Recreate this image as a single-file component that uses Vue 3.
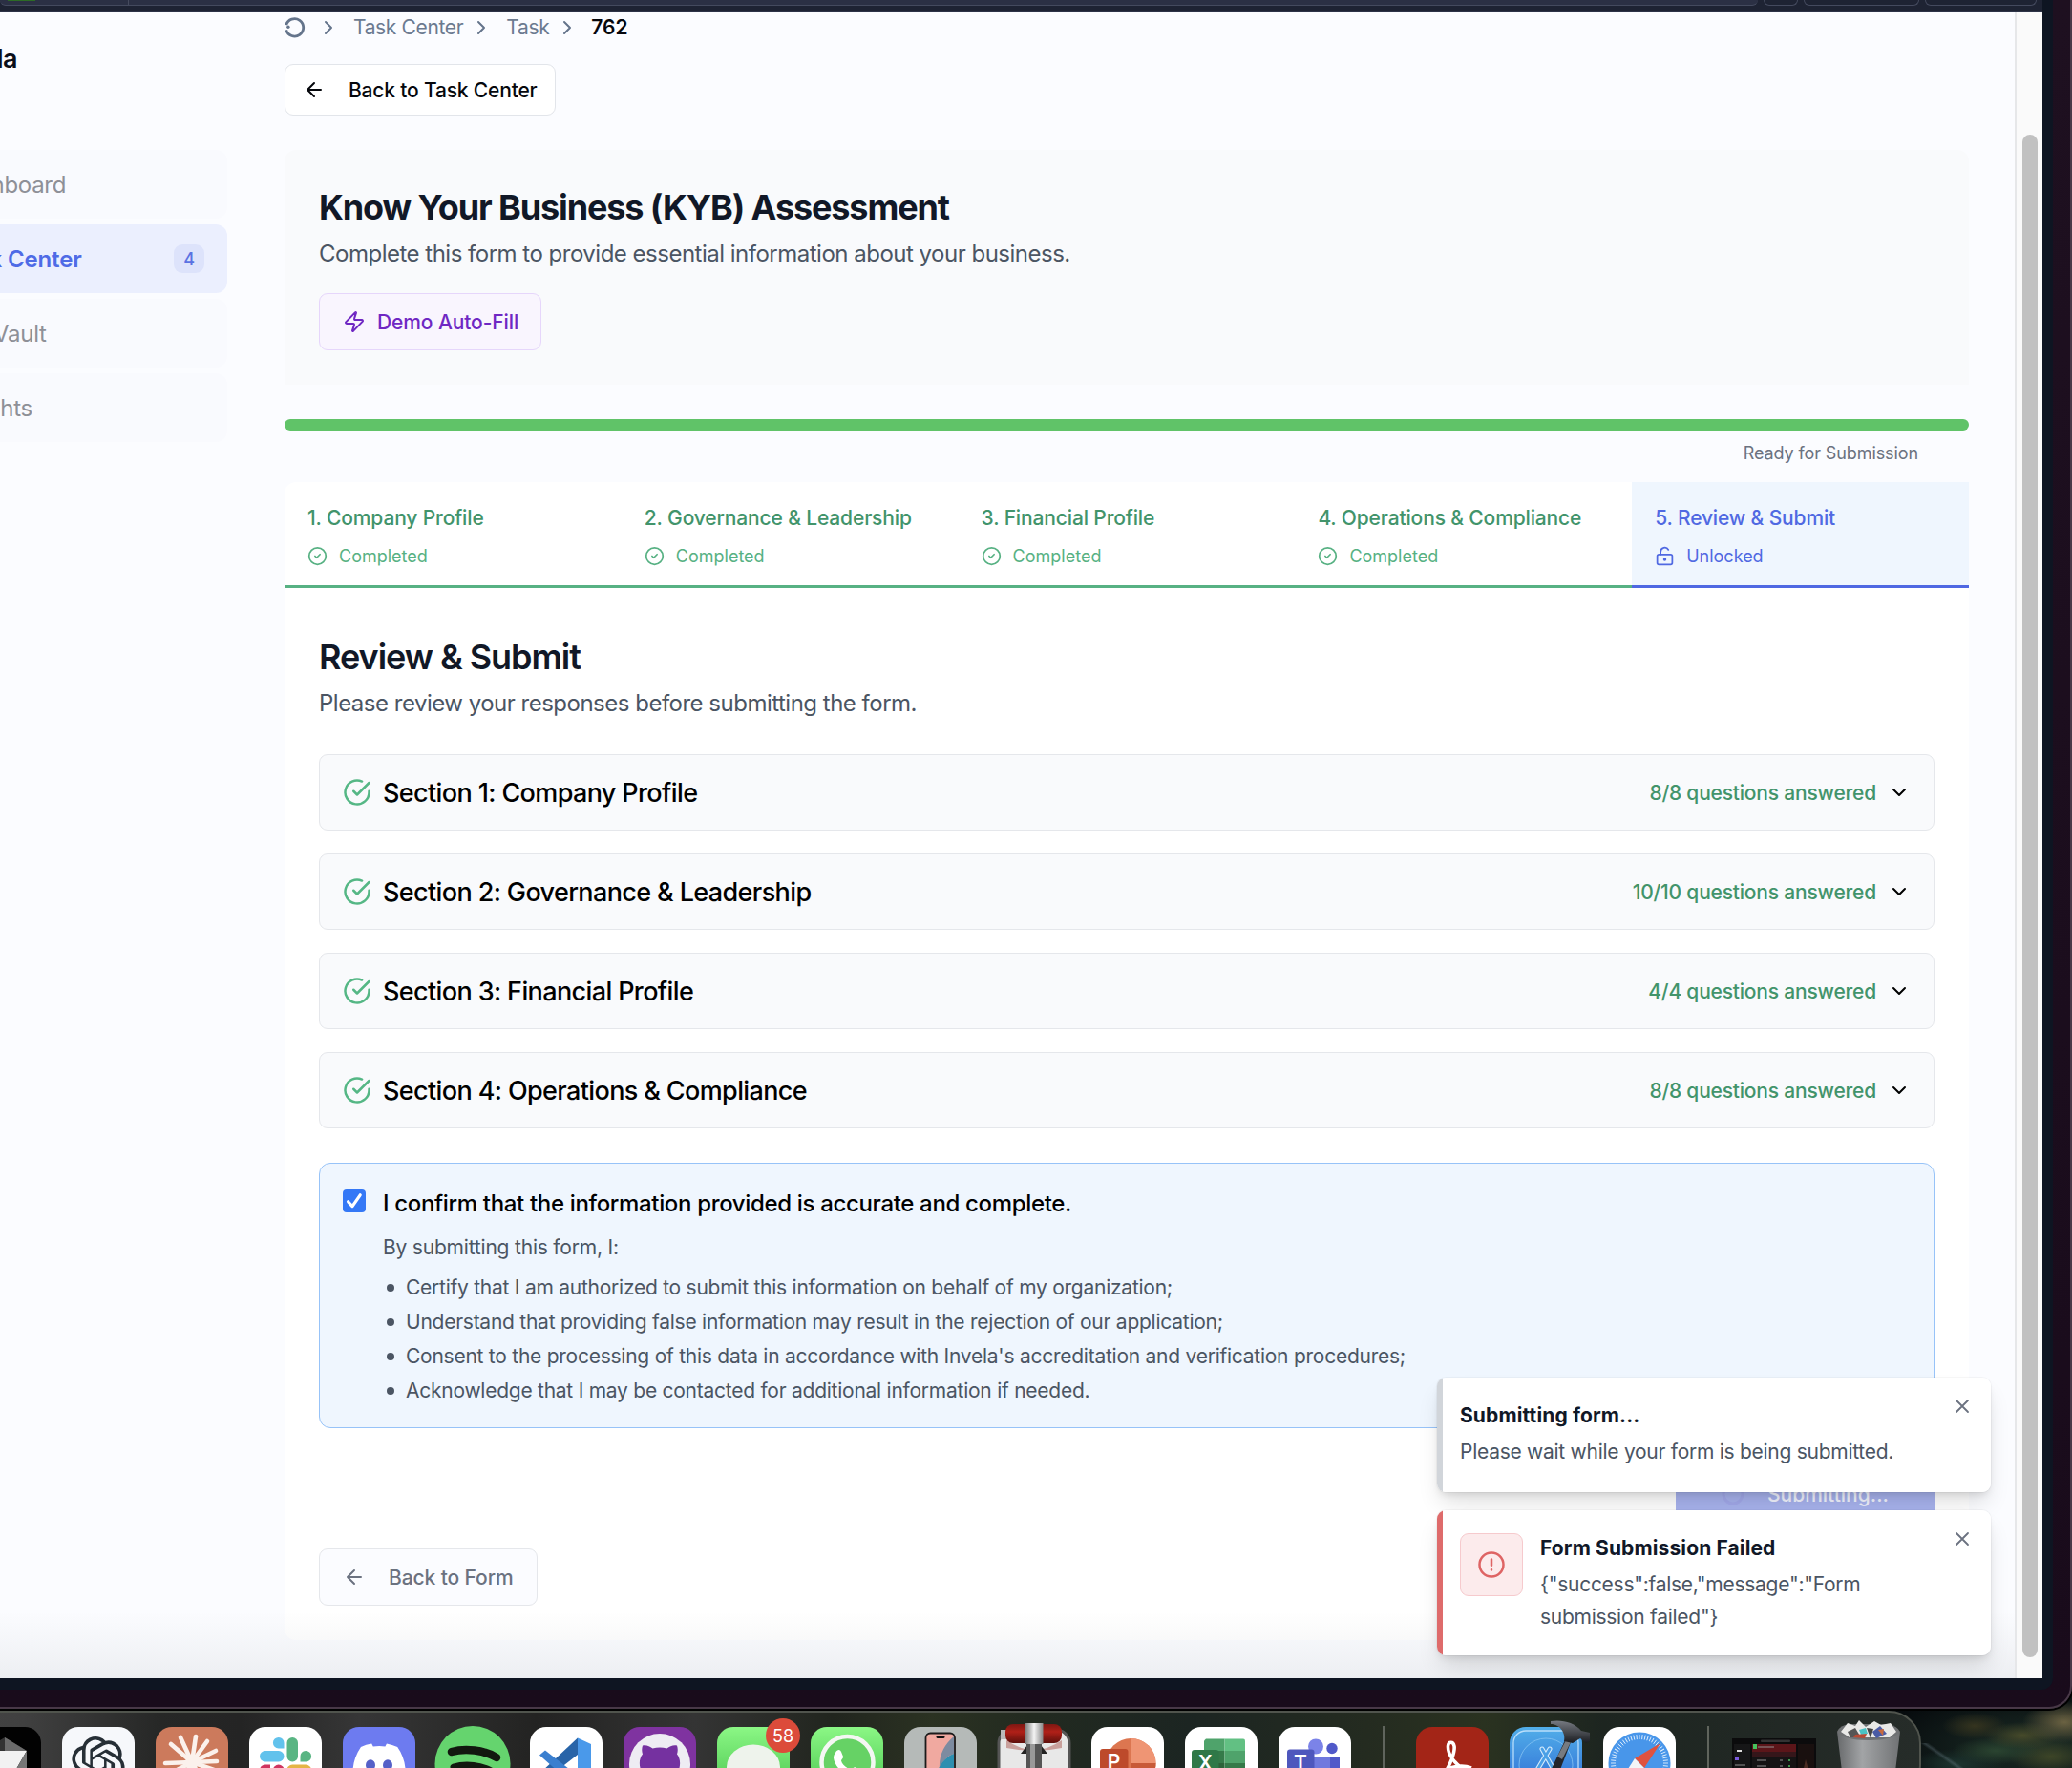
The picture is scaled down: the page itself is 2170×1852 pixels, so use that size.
<script setup>
const nav = [
  { label: 'Dashboard' },
  { label: 'Task Center', active: true, count: 4 },
  { label: 'File Vault' },
  { label: 'Insights' },
]
const tabs = [
  '1. Company Profile',
  '2. Governance & Leadership',
  '3. Financial Profile',
  '4. Operations & Compliance',
]
const sections = [
  { title: 'Section 1: Company Profile', answered: '8/8' },
  { title: 'Section 2: Governance & Leadership', answered: '10/10' },
  { title: 'Section 3: Financial Profile', answered: '4/4' },
  { title: 'Section 4: Operations & Compliance', answered: '8/8' },
]
const terms = [
  'Certify that I am authorized to submit this information on behalf of my organization;',
  'Understand that providing false information may result in the rejection of our application;',
  "Consent to the processing of this data in accordance with Invela's accreditation and verification procedures;",
  'Acknowledge that I may be contacted for additional information if needed.',
]
const rays = [
  [38, 37, 26, 11], [38, 37, 42, 10], [38, 37, 54, 15], [38, 37, 63, 25], [38, 37, 64, 36],
  [38, 37, 16, 18], [38, 37, 10, 38], [38, 37, 13, 50], [38, 37, 64, 46], [38, 37, 24, 62], [38, 37, 52, 62],
]
const ticks = Array.from({ length: 60 }, (_, i) => i * 6)
</script>

<template>
  <div class="desktop">
    <div class="window">
      <div class="frame">
        <div class="toolbar">
          <div class="url"><i class="lock"></i><i class="rule"></i></div>
          <div class="tool t1"></div>
          <div class="tool t2"></div>
          <div class="tool t3"></div>
        </div>
        <div class="page">
          <aside class="sidebar">
            <div class="brand">Invela</div>
            <nav>
              <div v-for="n in nav" :key="n.label" class="nav-item" :class="{ active: n.active }">
                <span>{{ n.label }}</span>
                <b v-if="n.count" class="count">{{ n.count }}</b>
              </div>
            </nav>
          </aside>

          <main class="main">
            <div class="crumbs">
              <svg class="home" width="22" height="22" viewBox="0 0 22 22" fill="none">
                <path d="M1.700 8.200A9.200 9.200 0 1 1 1.700 13.400" stroke="#64748b" stroke-width="2.800" />
                <circle cx="3.900" cy="10.200" r="1.700" fill="#64748b" />
              </svg>
              <svg class="chev" viewBox="0 0 24 24"><path d="m9 18 6-6-6-6" /></svg>
              <span class="c1">Task Center</span>
              <svg class="chev" viewBox="0 0 24 24"><path d="m9 18 6-6-6-6" /></svg>
              <span class="c2">Task</span>
              <svg class="chev" viewBox="0 0 24 24"><path d="m9 18 6-6-6-6" /></svg>
              <strong>762</strong>
            </div>

            <button class="btn back">
              <svg viewBox="0 0 24 24"><path d="m12 19-7-7 7-7M19 12H5" /></svg>
              <span>Back to Task Center</span>
            </button>

            <section class="intro">
              <h1>Know Your Business (KYB) Assessment</h1>
              <p>Complete this form to provide essential information about your business.</p>
              <button class="btn demo">
                <svg viewBox="0 0 24 24"><path d="M4 14a1 1 0 0 1-.78-1.63l9.9-10.2a.5.5 0 0 1 .86.46l-1.92 6.02A1 1 0 0 0 13 10h7a1 1 0 0 1 .78 1.63l-9.9 10.2a.5.5 0 0 1-.86-.46l1.92-6.02A1 1 0 0 0 11 14z" /></svg>
                <span>Demo Auto-Fill</span>
              </button>
            </section>

            <div class="progress"></div>
            <div class="ready">Ready for Submission</div>

            <div class="tabs">
              <div v-for="t in tabs" :key="t" class="tab">
                <div class="tab-title">{{ t }}</div>
                <div class="tab-state">
                  <svg viewBox="0 0 24 24"><circle cx="12" cy="12" r="10" /><path d="m9 12 2 2 4-4" /></svg>
                  <span>Completed</span>
                </div>
              </div>
              <div class="tab current">
                <div class="tab-title">5. Review &amp; Submit</div>
                <div class="tab-state">
                  <svg viewBox="0 0 24 24"><circle cx="12" cy="16" r="1" /><rect x="3" y="10" width="18" height="12" rx="2" /><path d="M7 10V7a5 5 0 0 1 9.33-2.5" /></svg>
                  <span>Unlocked</span>
                </div>
              </div>
            </div>

            <section class="review">
              <h2>Review &amp; Submit</h2>
              <p class="lead">Please review your responses before submitting the form.</p>

              <div class="sections">
                <div v-for="s in sections" :key="s.title" class="row">
                  <svg class="ok" viewBox="0 0 24 24"><path d="M22 11.08V12a10 10 0 1 1-5.93-9.14" /><path d="m9 11 3 3L22 4" /></svg>
                  <span class="row-title">{{ s.title }}</span>
                  <span class="answered">{{ s.answered }} questions answered</span>
                  <svg class="down" viewBox="0 0 24 24"><path d="m6 9 6 6 6-6" /></svg>
                </div>
              </div>

              <div class="consent">
                <span class="check">
                  <svg viewBox="0 0 24 24"><path d="M5.6 12.8 10 17.6 18.2 5.8" /></svg>
                </span>
                <div>
                  <div class="confirm">I confirm that the information provided is accurate and complete.</div>
                  <div class="by">By submitting this form, I:</div>
                  <ul>
                    <li v-for="t in terms" :key="t">{{ t }}</li>
                  </ul>
                </div>
              </div>

              <div class="submit-row">
                <button class="submit">
                  <svg class="spinner" viewBox="0 0 24 24"><circle cx="12" cy="12" r="10" /></svg>
                  <span>Submitting...</span>
                </button>
              </div>
              <button class="btn form-back">
                <svg viewBox="0 0 24 24"><path d="m12 19-7-7 7-7M19 12H5" /></svg>
                <span>Back to Form</span>
              </button>
            </section>
          </main>

          <div class="scroll"><div class="thumb"></div></div>
          <div class="shade"></div>

          <div class="toasts">
            <div class="toast">
              <div class="toast-body">
                <div class="toast-title">Submitting form...</div>
                <div class="toast-text">Please wait while your form is being submitted.</div>
              </div>
              <svg class="close" viewBox="0 0 24 24"><path d="M18 6 6 18M6 6l12 12" /></svg>
            </div>
            <div class="toast failed">
              <div class="alert">
                <svg viewBox="0 0 24 24"><circle cx="12" cy="12" r="10" /><path d="M12 7.5v5M12 16.2v.1" /></svg>
              </div>
              <div class="toast-body">
                <div class="toast-title">Form Submission Failed</div>
                <div class="toast-text">{"success":false,"message":"Form<br />submission failed"}</div>
              </div>
              <svg class="close" viewBox="0 0 24 24"><path d="M18 6 6 18M6 6l12 12" /></svg>
            </div>
          </div>
        </div>
      </div>
    </div>

    <div class="dock">
      <!-- Cursor -->
      <svg class="app" viewBox="0 0 76 76">
        <rect width="76" height="76" rx="17" fill="#020202" />
        <path d="M38 11 61 25H15Z" fill="#333" /><path d="M38 11 61 25 38 25Z" fill="#6b6b6b" />
        <path d="M15 25H61L38 65Z" fill="#f2f2f2" /><path d="M61 25V52L38 65Z" fill="#777" />
      </svg>
      <!-- ChatGPT -->
      <svg class="app" viewBox="0 0 76 76">
        <rect width="76" height="76" rx="17" fill="#f6f8fb" />
        <path transform="translate(10 10) scale(2.33)" fill="#262f36" d="M22.2819 9.8211a5.9847 5.9847 0 0 0-.5157-4.9108 6.0462 6.0462 0 0 0-6.5098-2.9A6.0651 6.0651 0 0 0 4.9807 4.1818a5.9847 5.9847 0 0 0-3.9977 2.9 6.0462 6.0462 0 0 0 .7427 7.0966 5.98 5.98 0 0 0 .511 4.9107 6.051 6.051 0 0 0 6.5146 2.9001A5.9847 5.9847 0 0 0 13.2599 24a6.0557 6.0557 0 0 0 5.7718-4.2058 5.9894 5.9894 0 0 0 3.9977-2.9001 6.0557 6.0557 0 0 0-.7475-7.0729zm-9.022 12.6081a4.4755 4.4755 0 0 1-2.8764-1.0408l.1419-.0804 4.7783-2.7582a.7948.7948 0 0 0 .3927-.6813v-6.7369l2.02 1.1686a.071.071 0 0 1 .038.052v5.5826a4.504 4.504 0 0 1-4.4945 4.4944zm-9.6607-4.1254a4.4708 4.4708 0 0 1-.5346-3.0137l.142.0852 4.783 2.7582a.7712.7712 0 0 0 .7806 0l5.8428-3.3685v2.3324a.0804.0804 0 0 1-.0332.0615L9.74 19.9502a4.4992 4.4992 0 0 1-6.1408-1.6464zM2.3408 7.8956a4.485 4.485 0 0 1 2.3655-1.9728V11.6a.7664.7664 0 0 0 .3879.6765l5.8144 3.3543-2.0201 1.1685a.0757.0757 0 0 1-.071 0l-4.8303-2.7865A4.504 4.504 0 0 1 2.3408 7.872zm16.5963 3.8558L13.1038 8.364 15.1192 7.2a.0757.0757 0 0 1 .071 0l4.8303 2.7913a4.4944 4.4944 0 0 1-.6765 8.1042v-5.6772a.79.79 0 0 0-.407-.667zm2.0107-3.0231l-.142-.0852-4.7735-2.7818a.7759.7759 0 0 0-.7854 0L9.409 9.2297V6.8974a.0662.0662 0 0 1 .0284-.0615l4.8303-2.7866a4.4992 4.4992 0 0 1 6.6802 4.66zM8.3065 12.863l-2.02-1.1638a.0804.0804 0 0 1-.038-.0567V6.0742a4.4992 4.4992 0 0 1 7.3757-3.4537l-.142.0805L8.704 5.459a.7948.7948 0 0 0-.3927.6813zm1.0976-2.3654l2.602-1.4998 2.6069 1.4998v2.9994l-2.5974 1.4997-2.6067-1.4997Z" />
      </svg>
      <!-- Claude -->
      <svg class="app" viewBox="0 0 76 76">
        <rect width="76" height="76" rx="17" fill="#cc7a5c" />
        <path v-for="(r, i) in rays" :key="i" :d="`M${r[0]} ${r[1]}L${r[2]} ${r[3]}`" stroke="#fbf1ec" stroke-width="4.6" stroke-linecap="round" />
        <circle cx="38" cy="37" r="7" fill="#fbf1ec" />
      </svg>
      <!-- Slack -->
      <svg class="app" viewBox="0 0 76 76">
        <rect width="76" height="76" rx="17" fill="#fff" />
        <path d="M36.500 22.500V17A5.800 5.800 0 1 0 30.700 22.500Z" fill="#62c2ec" /><rect x="11" y="25" width="25.500" height="11.500" rx="5.700" fill="#62c2ec" />
        <rect x="39.500" y="11" width="11.500" height="25.500" rx="5.700" fill="#59b583" /><path d="M53.500 36.500V31A5.800 5.800 0 1 1 59.500 36.500Z" fill="#59b583" />
        <rect x="39.500" y="39.500" width="25.500" height="11.500" rx="5.700" fill="#e5b445" /><path d="M11 45a5.800 5.800 0 0 1 5.800-5.500H22V45Z" fill="#cf3560" /><rect x="25" y="39.500" width="11.500" height="25" rx="5.700" fill="#cf3560" />
      </svg>
      <!-- Discord -->
      <svg class="app" viewBox="0 0 76 76">
        <rect width="76" height="76" rx="17" fill="#6d7bf0" />
        <path transform="translate(10.500 11) scale(2.300)" fill="#fff" d="M20.317 4.370a19.800 19.800 0 0 0-4.885-1.515l-.08.037c-.21.375-.444.865-.608 1.250a18.300 18.300 0 0 0-5.487 0c-.163-.394-.405-.875-.617-1.250l-.08-.037A19.700 19.700 0 0 0 3.677 4.370C.533 9.046-.319 13.580.1 18.058L6 21h12l5.900-2.940c.5-5.177-.838-9.674-3.583-13.690z" />
        <ellipse cx="29" cy="40" rx="5" ry="5.800" fill="#5560c8" /><ellipse cx="47" cy="40" rx="5" ry="5.800" fill="#5560c8" />
      </svg>
      <!-- Spotify -->
      <svg class="app" viewBox="0 0 76 76">
        <circle cx="38" cy="38.500" r="39.500" fill="#65d46e" />
        <g fill="none" stroke="#12180f" stroke-linecap="round"><path d="M16 26C30 22 50 24 63 32" stroke-width="8.500" /><path d="M18 42C31 38 47 40 59 47" stroke-width="7" /></g>
      </svg>
      <!-- VS Code -->
      <svg class="app" viewBox="0 0 76 76">
        <rect width="76" height="76" rx="17" fill="#fff" />
        <path d="M50 11.500V29L18 54 11 48Z" fill="#2864a8" /><path d="M10 29.500 16 24.500 64 62V68L50 65Z" fill="#3a7fcf" /><path d="M50 11.500 64 18V60L50 65Z" fill="#4a99ea" />
      </svg>
      <!-- GitHub -->
      <svg class="app" viewBox="0 0 76 76">
        <rect width="76" height="76" rx="17" fill="#7f33a0" />
        <circle cx="38" cy="39" r="32" fill="#eeecf3" />
        <path d="M20 19.500c4-1 7.500 1 10.500 3 5-1.200 10-1.200 15 0 3-2 6.500-4 10.500-3 1 3 1 6 0 9 4 5 4 12 1 19H19c-3-7-3-14 1-19-1-3-1-6 0-9Z" fill="#7531a0" />
      </svg>
      <!-- Messages -->
      <div class="app badge-host">
        <svg class="app" viewBox="0 0 76 76">
          <defs><linearGradient id="gm" x2="0" y2="1"><stop stop-color="#8bf785" /><stop offset="1" stop-color="#44c04a" /></linearGradient></defs>
          <rect width="76" height="76" rx="17" fill="url(#gm)" />
          <ellipse cx="38" cy="42" rx="28" ry="23.500" fill="#eef3ec" />
        </svg>
        <span class="badge">58</span>
      </div>
      <!-- WhatsApp -->
      <svg class="app" viewBox="0 0 76 76">
        <rect width="76" height="76" rx="17" fill="url(#gm)" />
        <circle cx="38.500" cy="37" r="27" fill="#66d265" stroke="#f4f7f3" stroke-width="4.500" />
        <path d="M26 27c2-4 5-3.500 6-1l2 5c.6 2-2 3-2 4.500 1 4 6 8 10 9 2 0 3-3 5-2l6 3c-1 6-6 8-10 7-10-3-18-12-19-20 0-2 .7-4 2-5.500Z" fill="#fff" />
      </svg>
      <!-- iPhone Mirroring -->
      <svg class="app" viewBox="0 0 76 76">
        <rect width="76" height="76" rx="17" fill="#b5bab8" />
        <rect x="22.500" y="6.500" width="30.500" height="66" rx="5" fill="#f0a9a0" stroke="#1b1b1b" stroke-width="1.800" />
        <path d="M52 10V28C45 30 40 36 37 44 36 30 42 18 52 10Z" fill="#7d8ba0" /><path d="M52 28C43 31 37 40 33 50H52Z" fill="#2d8fb0" />
        <rect x="33.500" y="9" width="9" height="3" rx="1.500" fill="#111" />
      </svg>
      <!-- Archive utility -->
      <svg class="app" viewBox="0 0 76 76">
        <defs>
          <linearGradient id="sv"><stop stop-color="#777" /><stop offset=".5" stop-color="#f4f4f4" /><stop offset="1" stop-color="#888" /></linearGradient>
          <linearGradient id="rd" x2="0" y2="1"><stop stop-color="#7d1712" /><stop offset=".4" stop-color="#b02018" /><stop offset="1" stop-color="#5f100c" /></linearGradient>
        </defs>
        <rect x="1" y="3" width="74" height="73" rx="14" fill="#e8e8e8" stroke="#555" stroke-width="3" />
        <path d="M9 14Q38 34 67 14V22Q38 28 9 22Z" fill="#c9a09c" />
        <path d="M24 28 38 10 52 28Z" fill="#222" />
        <rect x="30" y="16" width="16" height="60" fill="#555" /><rect x="34" y="16" width="5" height="60" fill="#999" />
        <rect x="3" y="3" width="9" height="10" fill="#bbb" />
        <rect x="8" y="-3" width="59" height="20" rx="8" fill="url(#rd)" />
        <rect x="28.500" y="-4" width="19" height="22" fill="url(#sv)" />
      </svg>
      <!-- PowerPoint -->
      <svg class="app" viewBox="0 0 76 76">
        <rect width="76" height="76" rx="17" fill="#fff" />
        <circle cx="41.500" cy="38" r="26" fill="#dc7650" /><path d="M41.500 12A26 26 0 0 1 67.500 38H41.500Z" fill="#ef9574" /><path d="M41.500 38H67.500A26 26 0 0 1 41.500 64Z" fill="#c85a38" />
        <rect x="9" y="23" width="29.500" height="30" rx="3" fill="#bd4a2b" />
        <text x="23.500" y="44" class="glyph">P</text>
      </svg>
      <!-- Excel -->
      <svg class="app" viewBox="0 0 76 76">
        <rect width="76" height="76" rx="17" fill="#fff" />
        <path d="M22 12.500H41.500V25H20V14.500Z" fill="#4fa36b" /><path d="M41.500 12.500H61Q63 12.500 63 14.500V25H41.500Z" fill="#62c083" />
        <path d="M20 25H41.500V38H20Z" fill="#357a49" /><path d="M41.500 25H63V38H41.500Z" fill="#4fa36b" /><path d="M20 38H41.500V60H20Z" fill="#2c6339" /><path d="M41.500 38H63V60H41.500Z" fill="#357a49" />
        <rect x="7" y="24" width="28.500" height="29" rx="3" fill="#2f7847" />
        <text x="21.300" y="45" class="glyph">X</text>
      </svg>
      <!-- Teams -->
      <svg class="app" viewBox="0 0 76 76">
        <rect width="76" height="76" rx="17" fill="#fff" />
        <circle cx="39" cy="20.500" r="8" fill="#7b83e8" /><circle cx="56" cy="22.500" r="5.700" fill="#5059c9" />
        <path d="M44 31H64V60H44Z" fill="#5059c9" /><path d="M24 31H54V60H24Z" fill="#7079de" />
        <rect x="9" y="23.500" width="28.500" height="30" rx="3" fill="#4e57bd" />
        <text x="23" y="45" class="glyph">T</text>
      </svg>
      <i class="sep"></i>
      <!-- Acrobat -->
      <svg class="app" viewBox="0 0 76 76">
        <rect width="76" height="76" rx="17" fill="#a32517" />
        <path d="M30 48C36 40 41 26 40 20 39 15 34 15 33.500 20 33 28 40 38 48 43M31 45C40 41 50 40 58 43" fill="none" stroke="#fff" stroke-width="3.600" />
      </svg>
      <!-- Xcode -->
      <svg class="app" viewBox="0 0 76 76">
        <defs><linearGradient id="xc" x2="0" y2="1"><stop stop-color="#51aee9" /><stop offset="1" stop-color="#2a62d2" /></linearGradient>
          <linearGradient id="hm" x2="0" y2="1"><stop stop-color="#777b82" /><stop offset="1" stop-color="#1b1d21" /></linearGradient></defs>
        <rect width="76" height="76" rx="17" fill="url(#xc)" />
        <rect x="4" y="4" width="68" height="70" rx="13" fill="none" stroke="#b9defa" stroke-width="1.300" />
        <circle cx="38" cy="40" r="28" fill="none" stroke="#86c4f3" stroke-width=".8" />
        <path d="M26 50 42 23M49 50 34 23" stroke="#d6ecfc" stroke-width="5" stroke-linecap="round" fill="none" /><path d="M26 50 42 23M49 50 34 23" stroke="#4aa0e6" stroke-width="2.800" stroke-linecap="round" fill="none" />
        <path d="M58 14 64 16 51 50H41Z" fill="#23262b" /><path d="M59 14 64 16 55 34 50 31Z" fill="#777b80" />
        <path d="M43-6C54-8 68-5 75 4L84 6V15L80 17 74 12 66 17 57 15C59 7 53-3 43-3Z" fill="url(#hm)" />
      </svg>
      <!-- Safari -->
      <svg class="app" viewBox="0 0 76 76">
        <rect width="76" height="76" rx="17" fill="#fff" />
        <circle cx="38" cy="38" r="32.500" fill="#4896ea" />
        <path v-for="t in ticks" :key="t" d="M38 8V13" :transform="`rotate(${t} 38 38)`" stroke="#e4f1fd" stroke-width=".9" />
        <path d="M60 17 43 43 33 33Z" fill="#e0523f" /><path d="M16 60 33 33 43 43Z" fill="#f3f5f7" />
      </svg>
      <i class="sep"></i>
      <!-- Minimised window -->
      <svg class="mini" viewBox="0 0 88 52">
        <rect width="88" height="52" fill="#0b0b0c" />
        <rect x="2" y="6" width="17" height="46" fill="#161617" /><rect x="21" y="6" width="46" height="46" fill="#151314" /><rect x="21" y="6" width="46" height="8" fill="#5b1519" /><rect x="21" y="14" width="46" height="6" fill="#35161a" /><rect x="69" y="6" width="17" height="46" fill="#19100f" />
        <rect x="22" y="6" width="4" height="5" fill="#46c25d" /><rect x="3" y="19" width="4" height="4" fill="#7b5be0" /><rect x="5" y="12" width="5" height="2" fill="#ddd" />
        <path d="M27 9H44M3 28H14M26 23H36M26 29H36M50 23H53M50 29H53" stroke="#8f8f8f" stroke-width="1.200" />
        <path d="M59 23H61M59 29H61" stroke="#4bc25e" stroke-width="1.500" />
        <rect x="30" y="1.500" width="31" height="2.500" rx="1" fill="#333" /><path d="M74 36 77 22 81 36Z" fill="#4b2b22" />
      </svg>
      <!-- Trash -->
      <svg class="trash" viewBox="0 0 68 70">
        <defs><linearGradient id="tr"><stop stop-color="#686a6c" /><stop offset=".4" stop-color="#a2a4a6" /><stop offset="1" stop-color="#707274" /></linearGradient></defs>
        <path d="M1 12 8 70H60L67 12Q34 26 1 12Z" fill="url(#tr)" />
        <path d="M1 12Q4 5 14 4L54 4Q64 6 67 12 60 21 34 21 8 21 1 12Z" fill="#6f7173" />
        <path d="M5 12 12 3 20 6 24 0 31 7 40 1 47 5 57 3 63 12 56 18H14Z" fill="#e9e9e7" />
        <path d="M12 12 20 8 26 18 15 18Z" fill="#555" /><path d="M24 10 31 8 33 14 26 15Z" fill="#4bc2c4" /><path d="M20 15 32 14 30 19 18 18Z" fill="#b64a34" /><path d="M38 12 46 6 53 14 42 19Z" fill="#4a5ba5" /><path d="M44 10 50 9 49 16Z" fill="#c86a3e" /><path d="M32 8 36 19 39 9Z" fill="#444" />
      </svg>
    </div>
  </div>
</template>

<style>
body { overflow: hidden; background: #0b0f10; }
</style>

<style scoped>
* { box-sizing: border-box; }
.desktop {
  width: 2170px; height: 1852px; overflow: hidden; display: flex; flex-direction: column;
  font-family: Inter, "Liberation Sans", sans-serif; color: #0b0f19;
  background:
    linear-gradient(35deg, transparent 44%, rgba(110, 130, 140, .35) 50%, transparent 56%) 2012px 1826px / 44px 26px no-repeat,
    radial-gradient(44px 22px at 2162px 1804px, #6b6242, transparent),
    radial-gradient(34px 14px at 2068px 1808px, #35341f, transparent),
    radial-gradient(40px 14px at 2118px 1818px, #474a2a, transparent),
    radial-gradient(46px 14px at 2090px 1834px, #2a4430, transparent),
    radial-gradient(44px 18px at 2148px 1840px, #3d4527, transparent),
    radial-gradient(50px 16px at 2050px 1848px, #1d3530, transparent),
    radial-gradient(170px 66px at 2130px 1830px, #1c2d26, transparent),
    #060a0d;
}
button { font-family: inherit; margin: 0; }
svg { flex: none; display: block; }
.window {
  flex: none; width: 2170px; height: 1790px; background: linear-gradient(#1e1020, #190b1b);
  border-right: 2px solid #4a3949; border-bottom: 2px solid #483847; border-radius: 0 0 24px 0;
  padding: 0 18px 18px 0; box-shadow: 0 0 0 2px #000;
}
.frame { height: 1770px; padding: 0 11px 12px 0; background: #0e1522; border-radius: 0 0 12px 0; display: flex; flex-direction: column; }
.toolbar { flex: none; height: 13px; background: #1e2333; border-bottom: 1px solid #2d3347; display: flex; gap: 6px; align-items: flex-start; }
.url { width: 1841px; height: 6px; background: #2b3044; border-bottom: 1px solid #444a5e; border-radius: 0 0 6px 6px; display: flex; }
.lock { width: 29px; height: 1px; background: #2c6b25; margin-left: 8px; }
.rule { width: 1px; height: 5px; background: #464b5e; margin-left: 97px; }
.tool { height: 6px; border: 1px solid #444a5e; border-top: 0; border-radius: 0 0 8px 8px; }
.t1 { width: 36px; } .t2 { width: 121px; } .t3 { width: 117px; }
.page { flex: 1; position: relative; display: flex; background: #fbfcff; overflow: hidden; }

.sidebar { flex: none; width: 238px; overflow: hidden; padding-top: 24px; }
.brand { height: 50px; line-height: 50px; font-size: 27px; font-weight: 600; width: 18px; direction: rtl; white-space: nowrap; letter-spacing: -.5px; }
nav { display: flex; flex-direction: column; gap: 6px; margin: 70px 0 0 -80px; }
.nav-item { height: 72px; border-radius: 12px; background: #f9fafe; display: flex; align-items: center; justify-content: space-between; padding: 0 24px 0 28px; font-size: 24px; letter-spacing: -.3px; color: #8e9097; white-space: nowrap; }
.nav-item.active { background: #ebeffe; color: #4f6be6; font-weight: 600; letter-spacing: -.15px; }
.count { width: 32px; height: 30px; border-radius: 9px; background: #dde3fb; font-size: 18px; font-weight: 500; display: grid; place-items: center; color: #5a72e2; }

.main { width: 1764px; margin-left: 60px; flex: none; }
.crumbs { height: 31px; display: flex; align-items: center; font-size: 21px; letter-spacing: -.35px; color: #6b7a90; }
.home { margin-right: 12px; }
.chev { width: 24px; height: 24px; fill: none; stroke: #64748b; stroke-width: 2; stroke-linecap: round; stroke-linejoin: round; }
.c1 { margin: 0 7px 0 14px; } .c2 { margin: 0 7px 0 14px; }
.crumbs strong { margin-left: 13px; color: #05070d; font-weight: 600; letter-spacing: 0; }
.btn { display: flex; align-items: center; font-size: 21px; font-weight: 500; border-radius: 9px; padding: 0; white-space: nowrap; letter-spacing: -.1px; }
.btn svg { fill: none; stroke: currentColor; stroke-width: 2; stroke-linecap: round; stroke-linejoin: round; width: 24px; height: 24px; }
.back { margin-top: 23px; width: 284px; height: 54px; background: #fff; border: 1.500px solid #e2e5ea; color: #05070c; padding-left: 18px; gap: 24px; letter-spacing: -.18px; }
.intro { margin-top: 36px; height: 246px; padding: 36px; background: #f9fafc; border-radius: 12px 12px 0 0; }
h1, h2, p, ul { margin: 0; }
h1, h2 { font-size: 36px; line-height: 48px; letter-spacing: -1.050px; font-weight: 600; color: #111827; }
h1 { font-weight: 700; letter-spacing: -1.110px; }
p { margin-top: 7px; font-size: 24px; line-height: 36px; color: #4b5563; letter-spacing: -.5px; }
.demo { margin-top: 23px; width: 233px; height: 60px; background: #f9f5fe; border: 1.500px solid #e6d6fb; color: #6f27c3; padding-left: 24px; gap: 12px; }
.progress { margin-top: 36px; height: 12px; border-radius: 6px; background: #60c368; }
.ready { margin-top: 10px; line-height: 27px; font-size: 18px; color: #6b7280; text-align: right; padding-right: 53px; letter-spacing: -.1px; }
.tabs { margin-top: 17px; display: flex; height: 111px; background: #fff; border-radius: 12px 0 0 0; }
.tab { flex: 1; border-bottom: 3px solid #57b183; padding: 23px 0 0 24px; color: #42946b; }
.tab-title { font-size: 21px; line-height: 30px; font-weight: 500; white-space: nowrap; letter-spacing: -.14px; }
.tab-state { margin-top: 11px; display: flex; align-items: center; gap: 12px; font-size: 18px; line-height: 27px; color: #57b183; }
.tab-state svg { width: 21px; height: 21px; fill: none; stroke: currentColor; stroke-width: 2; stroke-linecap: round; stroke-linejoin: round; }
.current, .current .tab-state { color: #5069e2; }
.current { background: #eff6fe; border-color: #4f68e2; }
.review { background: #fff; padding: 48px 36px 0; height: 1102px; border-radius: 0 0 12px 12px; }
.sections { margin-top: 35px; display: flex; flex-direction: column; gap: 24px; }
.row { height: 80px; border: 1.500px solid #e5e7eb; border-radius: 9px; background: #f9fafc; display: flex; align-items: center; padding: 0 24px; }
.ok { width: 30px; height: 30px; fill: none; stroke: #55b785; stroke-width: 2; stroke-linecap: round; stroke-linejoin: round; }
.row-title { margin-left: 12px; flex: 1; font-size: 27px; font-weight: 500; color: #000; white-space: nowrap; letter-spacing: -.62px; }
.answered { font-size: 21px; font-weight: 500; color: #42946b; letter-spacing: -.2px; }
.down { width: 24px; height: 24px; margin-left: 12px; fill: none; stroke: #000; stroke-width: 2; stroke-linecap: round; stroke-linejoin: round; }
.consent { margin-top: 36px; height: 278px; border: 1.500px solid #97c3f8; border-radius: 12px; background: #eff6fe; display: flex; gap: 18px; padding: 24px; }
.check { flex: none; width: 24px; height: 24px; margin-top: 3px; border-radius: 4px; background: #3478f6; }
.check svg { width: 24px; height: 24px; fill: none; stroke: #fff; stroke-width: 3.200; stroke-linecap: round; stroke-linejoin: round; }
.confirm { font-size: 24px; line-height: 36px; font-weight: 500; color: #000; letter-spacing: -.34px; }
.by { margin-top: 13px; font-size: 21px; line-height: 30px; color: #4b5563; letter-spacing: -.2px; }
ul { margin-top: 12px; padding: 0; list-style: none; display: flex; flex-direction: column; gap: 6px; font-size: 21px; line-height: 30px; color: #4b5563; letter-spacing: -.25px; }
li { display: flex; align-items: center; white-space: nowrap; }
li::before { content: ""; width: 8px; height: 8px; border-radius: 50%; background: #4b5563; margin: 0 12px 0 4px; }
.submit-row { margin-top: 39px; display: flex; justify-content: flex-end; }
.submit { width: 271px; height: 60px; border: 0; background: #a8b3ee; color: #f2f4fe; font-size: 21px; font-weight: 500; padding: 0 0 0 48px; display: flex; align-items: center; gap: 24px; }
.spinner { width: 24px; height: 24px; fill: none; stroke: #a2a9ea; stroke-width: 3; }
.form-back { margin-top: 27px; width: 229px; height: 60px; background: #fbfcff; border: 1.500px solid #e5e7eb; color: #6b7280; padding-left: 24px; gap: 24px; }

.scroll { margin-left: auto; width: 29px; border-left: 2px solid #e6e7e9; background: #fafafa; padding: 128px 0 0 6px; }
.thumb { width: 16px; height: 1595px; border-radius: 8px; background: #c1c1c1; }
.shade { position: absolute; left: 0; right: 29px; bottom: 0; height: 70px; background: linear-gradient(rgba(40, 50, 60, 0), rgba(40, 50, 60, .065)); }
.toasts { position: absolute; left: 1505px; top: 1430px; width: 580px; display: flex; flex-direction: column; gap: 19px; }
.toast { height: 120px; background: linear-gradient(90deg, #d1d5da 6px, #fff 6px); border-radius: 9px; box-shadow: 0 15px 24px -4px rgba(0, 0, 0, .12), 0 5px 9px -3px rgba(0, 0, 0, .12), 0 0 0 1px rgba(0, 0, 0, .03); display: flex; padding: 24px 22px 0 24px; }
.failed { height: 152px; background: linear-gradient(90deg, #de6b6b 6px, #fff 6px); }
.toast-body { flex: 1; white-space: nowrap; padding-top: 1px; }
.toast-title { font-size: 21px; line-height: 30px; font-weight: 700; color: #111827; letter-spacing: .12px; }
.toast-text { margin-top: 6px; font-size: 21px; line-height: 34px; color: #4b5563; letter-spacing: -.27px; }
.close { width: 24px; height: 24px; margin: -6px -4px 0 0; fill: none; stroke: #6b7280; stroke-width: 1.800; stroke-linecap: round; }
.alert { width: 66px; height: 66px; margin-right: 18px; border-radius: 9px; border: 1.500px solid #f6cacd; background: #fcebec; display: grid; place-items: center; }
.alert svg { width: 30px; height: 30px; fill: none; stroke: #de6464; stroke-width: 2; stroke-linecap: round; }

.dock {
  flex: none; margin-top: 2px; margin-left: -60px; width: 2072px; height: 90px; padding: 15px 0 0 27px;
  border: 2px solid #50544d; border-radius: 34px; display: flex; gap: 22px; align-items: flex-start;
  background: linear-gradient(90deg, #454545, #404040 4%, #262726 11%, #242424 15%, #363636 21%, #232322 30%, #343434 38%, #21251e 45%, #2b3222 50%, #222a20 55%, #1c2522 63%, #242b20 72%, #2a3220 78%, #1d2520 84%, #262c29);
}
.dock .app:first-child { margin-left: -2px; }
.dock .badge-host .app:first-child { margin-left: 0; }
.app { width: 76px; height: 76px; overflow: visible; flex: none; }
.badge-host { position: relative; }
.badge { position: absolute; left: 51px; top: -9px; width: 36px; height: 36px; border-radius: 50%; background: #dc4b3a; color: #fff; font-size: 18px; display: grid; place-items: center; }
.sep { width: 2px; height: 60px; margin: -1px 11px 0; background: #5f645c; }
.mini { width: 88px; height: 52px; margin: 12px 0 0 -9px; }
.trash { width: 68px; height: 70px; margin: -7px 0 0 -1px; }
.glyph { font: 600 21px Inter, sans-serif; fill: #fff; text-anchor: middle; }
</style>
